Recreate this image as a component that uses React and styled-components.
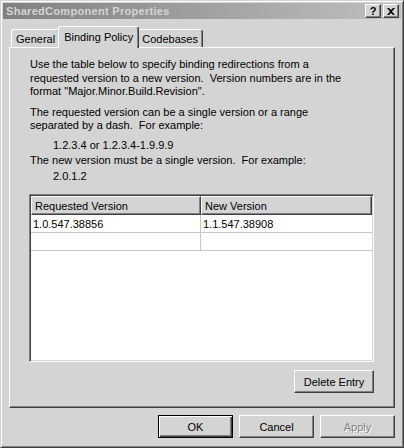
import React from "react";
import styled, { createGlobalStyle } from "styled-components";

const face = "#d4d4d4";

const GlobalStyle = createGlobalStyle`
  html, body {
    margin: 0;
    padding: 0;
    background: ${face};
  }
  body {
    font-family: "Liberation Sans", Arial, sans-serif;
    font-size: 11px;
    color: #000;
  }
`;

const Window = styled.div`
  width: 404px;
  height: 448px;
  box-sizing: border-box;
  background: ${face};
  border: 1px solid;
  border-color: ${face} #404040 #404040 ${face};
  box-shadow: inset 1px 1px #fff, inset -1px -1px #808080;
  padding: 2px;
  display: flex;
  flex-direction: column;
`;

const TitleBar = styled.div`
  height: 18px;
  display: flex;
  align-items: center;
  justify-content: space-between;
  padding: 0 2px 0 3px;
  background: linear-gradient(to right, #808080, #c0c0c0);
`;

const Caption = styled.span`
  font-weight: bold;
  font-size: 11px;
  color: ${face};
  letter-spacing: 0.3px;
`;

const CaptionButtons = styled.div`
  display: flex;
  gap: 2px;
`;

const CaptionButton = styled.div`
  width: 16px;
  height: 14px;
  box-sizing: border-box;
  background: ${face};
  border: 1px solid;
  border-color: #fff #404040 #404040 #fff;
  box-shadow: inset -1px -1px #808080;
  display: flex;
  align-items: center;
  justify-content: center;
  font-weight: bold;
  font-size: 11px;
  line-height: 1;
`;

const Body = styled.div`
  flex: 1;
  display: flex;
  flex-direction: column;
  padding: 7px 6px 7px 6px;
`;

const TabRow = styled.div`
  display: flex;
  align-items: flex-end;
  padding-left: 2px;
  position: relative;
  z-index: 1;
`;

const Tab = styled.div`
  box-sizing: border-box;
  height: ${(p) => (p.$active ? "22px" : "18px")};
  margin: ${(p) => (p.$active ? "0 -2px -1px -2px" : "0")};
  padding: ${(p) => (p.$active ? "2px 5px 0" : "1px 4px 0")};
  background: ${face};
  border-top: 1px solid #fff;
  border-left: 1px solid #fff;
  border-right: 1px solid #404040;
  box-shadow: inset -1px 0 #808080;
  border-radius: 3px 3px 0 0;
  display: flex;
  align-items: ${(p) => (p.$active ? "flex-start" : "center")};
  line-height: 16px;
  position: relative;
  z-index: ${(p) => (p.$active ? 2 : 0)};
`;

const Panel = styled.div`
  flex: 1;
  box-sizing: border-box;
  border: 1px solid;
  border-color: #fff #404040 #404040 #fff;
  box-shadow: inset -1px -1px #808080;
  padding: 10px 20px 14px 19px;
  display: flex;
  flex-direction: column;
`;

const Para = styled.p`
  margin: 0 0 ${(p) => p.$gap || 0}px ${(p) => (p.$indent ? 24 : 1)}px;
  line-height: 13.5px;
  white-space: nowrap;
`;

const ListView = styled.div`
  margin-top: 11px;
  height: 168px;
  box-sizing: border-box;
  background: #fff;
  border: 1px solid;
  border-color: #808080 #fff #fff #808080;
  box-shadow: inset 1px 1px #404040, inset -1px -1px ${face};
  padding: 1px;
`;

const Grid = styled.div`
  display: grid;
  grid-template-columns: 170px 1fr;
`;

const HeaderCell = styled.div`
  height: 19px;
  box-sizing: border-box;
  background: ${face};
  border: 1px solid;
  border-color: #fff #404040 #404040 #fff;
  box-shadow: inset -1px -1px #808080;
  padding: 0 3px;
  display: flex;
  align-items: center;
`;

const Cell = styled.div`
  height: 18px;
  box-sizing: border-box;
  border-bottom: 1px solid #c8c8c8;
  border-right: ${(p) => (p.$first ? "1px solid #c8c8c8" : "none")};
  padding: 0 2px;
  display: flex;
  align-items: center;
`;

const Actions = styled.div`
  display: flex;
  justify-content: flex-end;
  gap: 6px;
  margin-top: ${(p) => p.$top || 0}px;
`;

const Button = styled.button`
  width: ${(p) => p.$width || 75}px;
  height: 23px;
  box-sizing: border-box;
  background: ${face};
  font-family: "Liberation Sans", Arial, sans-serif;
  font-size: 11px;
  color: ${(p) => (p.disabled ? "#808080" : "#000")};
  text-shadow: ${(p) => (p.disabled ? "1px 1px #fff" : "none")};
  border: 1px solid;
  border-color: ${(p) =>
    p.$default ? "#000" : "#fff #404040 #404040 #fff"};
  box-shadow: ${(p) =>
    p.$default
      ? "inset 1px 1px #fff, inset -1px -1px #404040, inset -2px -2px #808080"
      : "inset -1px -1px #808080"};
  padding: 0;
  cursor: default;
`;

const Footer = styled(Actions)`
  margin-top: 7px;
`;

export default function App() {
  return (
    <>
      <GlobalStyle />
      <Window>
        <TitleBar>
          <Caption>SharedComponent Properties</Caption>
          <CaptionButtons>
            <CaptionButton>?</CaptionButton>
            <CaptionButton>
              <svg width="8" height="7" viewBox="0 0 8 7">
                <path d="M0 0h2l2 2 2-2h2L5 3.5 8 7H6L4 5 2 7H0l3-3.5z" fill="#000" />
              </svg>
            </CaptionButton>
          </CaptionButtons>
        </TitleBar>
        <Body>
          <TabRow>
            <Tab>General</Tab>
            <Tab $active>Binding Policy</Tab>
            <Tab>Codebases</Tab>
          </TabRow>
          <Panel>
            <Para $gap={7}>
              Use the table below to specify binding redirections from a
              <br />
              requested version to a new version.&nbsp; Version numbers are in the
              <br />
              format "Major.Minor.Build.Revision".
            </Para>
            <Para $gap={6}>
              The requested version can be a single version or a range
              <br />
              separated by a dash.&nbsp; For example:
            </Para>
            <Para $indent $gap={2}>1.2.3.4 or 1.2.3.4-1.9.9.9</Para>
            <Para $gap={2}>
              The new version must be a single version.&nbsp; For example:
            </Para>
            <Para $indent>2.0.1.2</Para>
            <ListView>
              <Grid>
                <HeaderCell>Requested Version</HeaderCell>
                <HeaderCell>New Version</HeaderCell>
                <Cell $first>1.0.547.38856</Cell>
                <Cell>1.1.547.38908</Cell>
                <Cell $first />
                <Cell />
              </Grid>
            </ListView>
            <Actions $top={8}>
              <Button $width={80}>Delete Entry</Button>
            </Actions>
          </Panel>
          <Footer>
            <Button $default>OK</Button>
            <Button>Cancel</Button>
            <Button disabled>Apply</Button>
          </Footer>
        </Body>
      </Window>
    </>
  );
}
